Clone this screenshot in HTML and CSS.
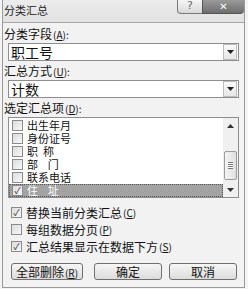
FILE: index.html
```html
<!DOCTYPE html>
<html lang="zh-CN">
<head>
  <meta charset="UTF-8" />
  <title>分类汇总</title>
  <link rel="stylesheet" href="styles.css">
</head>
<body>
  <div class="window">
    <div class="titlebar">
      <span class="title">分类汇总</span>
      <div class="caption">
        <span class="cap-help">?</span>
        <span class="cap-close">✕</span>
      </div>
    </div>

    <div class="body">
      <div class="label">分类字段<span class="key">(<u>A</u>):</span></div>
      <div class="combo">
        <span class="combo-text">职工号</span>
        <span class="drop"><svg width="7" height="4" viewBox="0 0 7 4"><path d="M0 0h7L3.5 4z" fill="#222"/></svg></span>
      </div>

      <div class="label">汇总方式<span class="key">(<u>U</u>):</span></div>
      <div class="combo">
        <span class="combo-text">计数</span>
        <span class="drop"><svg width="7" height="4" viewBox="0 0 7 4"><path d="M0 0h7L3.5 4z" fill="#222"/></svg></span>
      </div>

      <div class="label">选定汇总项<span class="key">(<u>D</u>):</span></div>
      <div class="listbox">
        <div class="rows">
          <div class="row"><span class="box"></span>出生年月</div>
          <div class="row"><span class="box"></span>身份证号</div>
          <div class="row"><span class="box"></span>职&nbsp;&nbsp;称</div>
          <div class="row"><span class="box"></span>部&nbsp;&nbsp;&nbsp;&nbsp;门</div>
          <div class="row"><span class="box"></span>联系电话</div>
          <div class="row selected"><span class="box checked">✓</span>住&nbsp;&nbsp;&nbsp;&nbsp;址</div>
        </div>
        <div class="scrollbar">
          <span class="arrow"><svg width="7" height="4" viewBox="0 0 7 4"><path d="M0 4h7L3.5 0z" fill="#333"/></svg></span>
          <span class="track">
            <span class="thumb"><span class="grip"></span></span>
          </span>
          <span class="arrow"><svg width="7" height="4" viewBox="0 0 7 4"><path d="M0 0h7L3.5 4z" fill="#333"/></svg></span>
        </div>
      </div>

      <div class="options">
        <div class="opt"><span class="box checked">✓</span>替换当前分类汇总<span class="key">(<u>C</u>)</span></div>
        <div class="opt"><span class="box"></span>每组数据分页<span class="key">(<u>P</u>)</span></div>
        <div class="opt"><span class="box checked">✓</span>汇总结果显示在数据下方<span class="key">(<u>S</u>)</span></div>
      </div>

      <div class="buttons">
        <button class="btn wide">全部删除<span class="key">(<u>R</u>)</span></button>
        <button class="btn">确定</button>
        <button class="btn">取消</button>
      </div>
    </div>
  </div>
</body>
</html>
```

FILE: styles.css
```css
body {
  margin: 0;
  background: #f4f4f4;
  font-family: "Noto Sans CJK SC", "DejaVu Sans", sans-serif;
  font-size: 12px;
  color: #111;
}
.window {
  margin-left: 2px;
  width: 241px;
  height: 287px;
  border: 1px solid #9a9a9a;
  border-top: none;
  background: #e4e4e4;
  display: flex;
  flex-direction: column;
}
.titlebar {
  height: 22px;
  display: flex;
  justify-content: space-between;
  background: linear-gradient(#ececec, #e2e2e2);
}
.title {
  padding: 2px 0 0 1px;
  font-size: 11px;
  line-height: 16px;
  color: #222;
}
.caption {
  display: flex;
  height: 14px;
}
.cap-help {
  width: 24px;
  border: 1px solid #7a7a7a;
  border-top: none;
  border-right: none;
  border-bottom-left-radius: 4px;
  background: linear-gradient(#f6f6f6, #d8d8d8);
  text-align: center;
  font-family: "DejaVu Sans", sans-serif;
  font-size: 11px;
  line-height: 12px;
  color: #666;
}
.cap-close {
  width: 41px;
  border-bottom: 1px solid #555;
  border-left: 1px solid #555;
  border-bottom-right-radius: 4px;
  background: linear-gradient(#9a9a9a, #6e6e6e);
  text-align: center;
  font-family: "DejaVu Sans", sans-serif;
  font-size: 10px;
  font-weight: bold;
  line-height: 13px;
  color: #fff;
}
.body {
  flex: 1;
  border-top: 1px solid #a8a8a8;
  background: #f2f2f2;
  padding: 4px 0 0 1px;
}
.label {
  height: 13px;
  line-height: 13px;
  margin-bottom: 3px;
}
.key {
  font-size: 10px;
  margin-left: 1px;
}
.combo {
  margin: 0 5px 3px 4px;
  height: 16px;
  border: 1px solid #8e8e8e;
  background: #fff;
  display: flex;
  justify-content: space-between;
  align-items: center;
}
.combo-text {
  padding-left: 2px;
  font-size: 14px;
  line-height: 16px;
}
.drop {
  width: 12px;
  height: 14px;
  margin-right: 1px;
  border: 1px solid #bcbcbc;
  background: linear-gradient(#fafafa, #e6e6e6);
  display: flex;
  align-items: center;
  justify-content: center;
}
.listbox {
  margin: 1px 5px 0 4px;
  height: 79px;
  border: 1px solid #8e8e8e;
  background: #fff;
  display: flex;
}
.rows {
  flex: 1;
  padding-top: 1px;
}
.row {
  height: 13px;
  line-height: 13px;
  display: flex;
  align-items: center;
  font-size: 11px;
}
.row.selected {
  background: #a3a3a3;
  color: #fff;
  outline: 1px dotted #555;
  outline-offset: -1px;
}
.box {
  width: 9px;
  height: 9px;
  margin: 0 4px 0 3px;
  border: 1px solid #8c8c8c;
  background: linear-gradient(135deg, #dcdcdc, #f8f8f8);
  font-size: 9px;
  line-height: 9px;
  text-align: center;
  color: #333;
  flex: none;
}
.scrollbar {
  width: 15px;
  background: #f0f0f0;
  display: flex;
  flex-direction: column;
}
.arrow {
  height: 15px;
  display: flex;
  align-items: center;
  justify-content: center;
}
.track {
  flex: 1;
  display: flex;
  flex-direction: column;
  justify-content: flex-end;
  padding-bottom: 2px;
}
.thumb {
  height: 27px;
  margin: 0 1px;
  border: 1px solid #9c9c9c;
  border-radius: 2px;
  background: linear-gradient(90deg, #f4f4f4, #e0e0e0);
  display: flex;
  align-items: center;
  justify-content: center;
}
.grip {
  width: 5px;
  height: 5px;
  border-top: 1px solid #777;
  border-bottom: 1px solid #777;
  background: linear-gradient(#fff 0 1px, #777 1px 2px, #fff 2px 3px, #777 3px 4px, #fff 4px);
}
.options {
  padding: 8px 0 0 3px;
}
.opt {
  height: 13px;
  line-height: 13px;
  margin-bottom: 4px;
  display: flex;
  align-items: center;
  font-size: 12px;
}
.opt .box {
  margin-left: 4px;
}
.buttons {
  display: flex;
  margin: 10px 0 0 7px;
}
.btn {
  height: 17px;
  width: 70px;
  margin-right: 7px;
  padding: 0;
  border: 1px solid #707070;
  border-radius: 3px;
  background: linear-gradient(#f6f6f6, #dcdcdc);
  font-family: inherit;
  font-size: 12px;
  line-height: 15px;
  color: #111;
}
.btn.wide {
  width: 74px;
  margin-right: 11px;
}
```
